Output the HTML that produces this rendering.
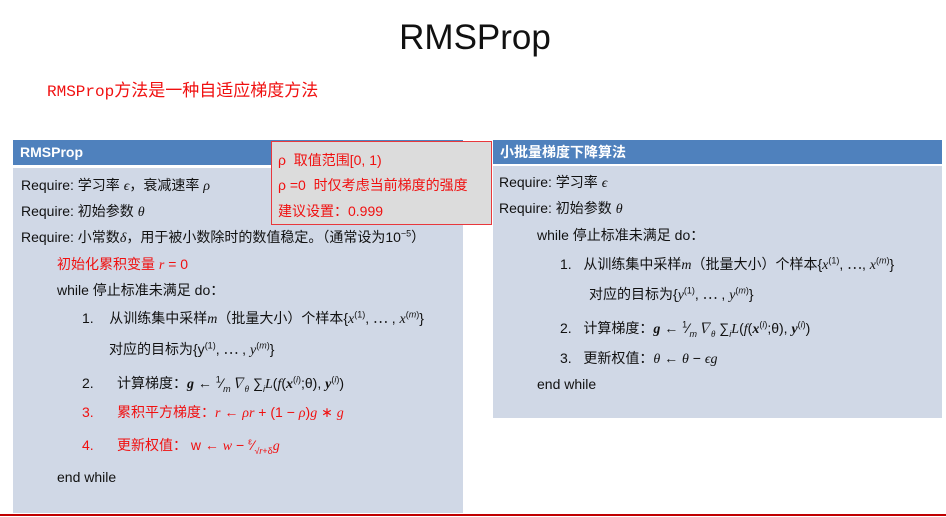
<!DOCTYPE html>
<html><head><meta charset="utf-8"><style>
body{margin:0;width:946px;height:517px;background:#fff;position:relative;overflow:hidden;font-family:"Liberation Sans","Noto Sans CJK SC",sans-serif;color:#111}
.a{position:absolute;white-space:nowrap;font-size:14px;line-height:16px}
.m{font-family:"Liberation Serif","Noto Serif CJK SC",serif;font-style:italic}
.r{color:#f01010}
.hd{position:absolute;background:#4f81bd;color:#fff;font-weight:bold;font-size:14px;line-height:24px;padding-left:7px;box-sizing:border-box}
.bd{position:absolute;background:#d0d8e6}
sup,sub{font-size:9px;line-height:0}
</style></head><body>
<div class="a" style="left:2px;width:946px;text-align:center;top:18px;font-size:35px;line-height:40px">RMSProp</div>
<div class="a r" style="left:47px;top:81px;font-size:17px;line-height:20px"><span style="font-family:'Liberation Mono',monospace;font-size:16px">RMSProp</span>方法是一种自适应梯度方法</div>

<div class="hd" style="left:13px;top:140px;width:450px;height:25px">RMSProp</div>
<div class="bd" style="left:13px;top:168px;width:450px;height:345px"></div>
<div class="a" style="left:21px;top:177px">Require: 学习率 <span class="m">ϵ</span>，衰减速率 <span class="m">ρ</span></div>
<div class="a" style="left:21px;top:203px">Require: 初始参数 <span class="m">θ</span></div>
<div class="a" style="left:21px;top:229px">Require: 小常数<span class="m">δ</span>，用于被小数除时的数值稳定。（通常设为10<sup>−5</sup>）</div>
<div class="a r" style="left:57px;top:256px">初始化累积变量 <span class="m">r</span> = 0</div>
<div class="a" style="left:57px;top:282px">while 停止标准未满足 do：</div>
<div class="a" style="left:82px;top:310px">1.&nbsp;&nbsp;&nbsp;&nbsp;从训练集中采样<span class="m">m</span>（批量大小）个样本{<span class="m">x</span><sup>(1)</sup>, ⋯ , <span class="m">x</span><sup>(<i>m</i>)</sup>}</div>
<div class="a" style="left:109px;top:341px">对应的目标为{y<sup>(1)</sup>, ⋯ , <span class="m">y</span><sup>(<i>m</i>)</sup>}</div>
<div class="a" style="left:82px;top:375px">2.&nbsp;&nbsp;&nbsp;&nbsp;&nbsp;&nbsp;计算梯度：<b class="m">g</b> ← <sup>1</sup>⁄<sub><i>m</i></sub><span class="m">∇<sub>θ</sub></span> ∑<sub><i>i</i></sub><span class="m">L</span>(<span class="m">f</span>(<b class="m">x</b><sup>(<i>i</i>)</sup>;θ), <b class="m">y</b><sup>(<i>i</i>)</sup>)</div>
<div class="a r" style="left:82px;top:404px">3.&nbsp;&nbsp;&nbsp;&nbsp;&nbsp;&nbsp;累积平方梯度：<span class="m">r</span> ← <span class="m">ρr</span> + (1 − <span class="m">ρ</span>)<span class="m">g</span> ∗ <span class="m">g</span></div>
<div class="a r" style="left:82px;top:437px">4.&nbsp;&nbsp;&nbsp;&nbsp;&nbsp;&nbsp;更新权值： w ← <span class="m">w</span> − <sup>ε</sup>⁄<sub>√<i>r</i>+δ</sub><span class="m">g</span></div>
<div class="a" style="left:57px;top:469px">end while</div>

<div class="a" style="left:271px;top:141px;width:219px;height:82px;background:#dcdcdc;border:1px solid #e8383c"></div>
<div class="a r" style="left:278px;top:152px">ρ&nbsp;&nbsp;取值范围[0, 1)</div>
<div class="a r" style="left:278px;top:177px">ρ =0&nbsp;&nbsp;时仅考虑当前梯度的强度</div>
<div class="a r" style="left:278px;top:203px">建议设置：0.999</div>

<div class="hd" style="left:493px;top:140px;width:449px;height:24px">小批量梯度下降算法</div>
<div class="bd" style="left:493px;top:166px;width:449px;height:252px"></div>
<div class="a" style="left:499px;top:174px">Require: 学习率 <span class="m">ϵ</span></div>
<div class="a" style="left:499px;top:200px">Require: 初始参数 <span class="m">θ</span></div>
<div class="a" style="left:537px;top:227px">while 停止标准未满足 do：</div>
<div class="a" style="left:560px;top:256px">1.&nbsp;&nbsp;&nbsp;从训练集中采样<span class="m">m</span>（批量大小）个样本{<span class="m">x</span><sup>(1)</sup>, ⋯, <span class="m">x</span><sup>(<i>m</i>)</sup>}</div>
<div class="a" style="left:589px;top:286px">对应的目标为{<span class="m">y</span><sup>(1)</sup>, ⋯ , <span class="m">y</span><sup>(<i>m</i>)</sup>}</div>
<div class="a" style="left:560px;top:320px">2.&nbsp;&nbsp;&nbsp;计算梯度：<b class="m">g</b> ← <sup>1</sup>⁄<sub><i>m</i></sub><span class="m">∇<sub>θ</sub></span> ∑<sub><i>i</i></sub><span class="m">L</span>(<span class="m">f</span>(<b class="m">x</b><sup>(<i>i</i>)</sup>;θ), <b class="m">y</b><sup>(<i>i</i>)</sup>)</div>
<div class="a" style="left:560px;top:350px">3.&nbsp;&nbsp;&nbsp;更新权值：<span class="m">θ</span> ← <span class="m">θ</span> − <span class="m">ϵg</span></div>
<div class="a" style="left:537px;top:376px">end while</div>

<div style="position:absolute;left:0;top:514px;width:946px;height:2px;background:#c00000"></div>
</body></html>
